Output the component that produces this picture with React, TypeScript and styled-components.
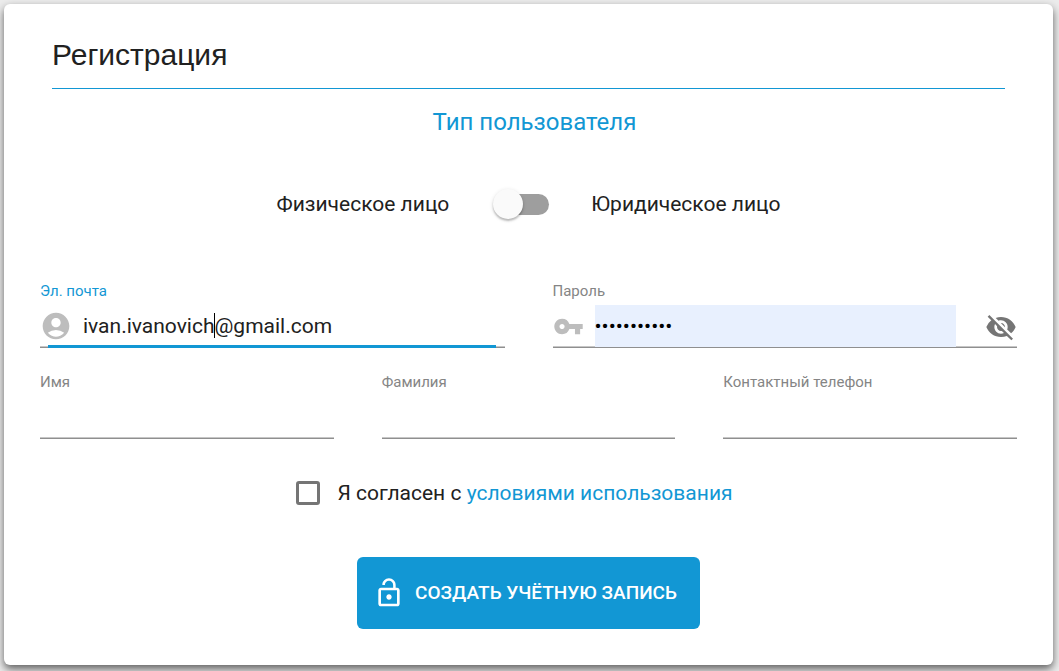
import React, { useState } from 'react';
import styled, { createGlobalStyle } from 'styled-components';
import { MdAccountCircle, MdLockOpen, MdVisibilityOff, MdVpnKey } from 'react-icons/md';

const blue = '#1297d4';

const GlobalStyle = createGlobalStyle`
  *, *::before, *::after { box-sizing: border-box; }
  body {
    margin: 0;
    background: #ececec;
    color: #212121;
    font: 400 21px/32px Roboto, sans-serif;
  }
`;

const Page = styled.main`
  padding: 4px 6px 6px 4px;
`;

const Card = styled.form`
  padding: 31px 36px 36px;
  border-radius: 6px;
  background: #fff;
  box-shadow: 0 4px 8px rgba(0, 0, 0, 0.6);
`;

const Header = styled.header`
  margin: 0 12px;
  padding-bottom: 13px;
  border-bottom: 1px solid ${blue};
`;

const Title = styled.h1`
  margin: 0;
  font: 400 30px/40px 'Liberation Sans', Arial, sans-serif;
`;

const Subtitle = styled.h2`
  margin: 17px 0 0;
  padding-left: 12px;
  color: ${blue};
  font-size: 24px;
  font-weight: 400;
  line-height: 32px;
  text-align: center;
`;

const TypeRow = styled.div`
  display: flex;
  justify-content: center;
  align-items: center;
  gap: 42px;
  margin-top: 50px;
`;

const Toggle = styled.input`
  appearance: none;
  position: relative;
  width: 54px;
  height: 21px;
  margin: 0 0 0 4px;
  border-radius: 11px;
  background: #9e9e9e;
  cursor: pointer;

  &::before {
    content: '';
    position: absolute;
    top: -5px;
    left: -2px;
    width: 30px;
    height: 30px;
    border-radius: 50%;
    background: #fafafa;
    box-shadow: 0 2px 2px rgba(0, 0, 0, 0.22), 0 1px 4px rgba(0, 0, 0, 0.12);
  }

  &:checked::before {
    left: 26px;
    background: ${blue};
  }
`;

const FieldRow = styled.div<{ $columns: number }>`
  display: grid;
  grid-template-columns: repeat(${(p) => p.$columns}, minmax(0, 1fr));
  gap: 48px;
  margin-top: 24px;
`;

const Fields = styled.section`
  padding-top: 37px;
`;

const Field = styled.div`
  display: flex;
  flex-direction: column;
  gap: 4px;
`;

const Label = styled.label<{ $active?: boolean }>`
  color: ${(p) => (p.$active ? blue : '#858585')};
  font-size: 15px;
  line-height: 20px;
`;

const Control = styled.div<{ $active?: boolean }>`
  position: relative;
  display: flex;
  align-items: center;
  height: 43px;
  border-bottom: 1px solid #8f8f8f;
  box-shadow: inset 0 -1px #c6c6c6;

  &::after {
    content: '';
    display: ${(p) => (p.$active ? 'block' : 'none')};
    position: absolute;
    right: 9px;
    bottom: -1px;
    left: 8px;
    height: 3px;
    background: ${blue};
  }
`;

const LeadingIcon = styled.span`
  display: flex;
  flex: none;
  width: 32px;
  color: #bdbdbd;
`;

const InputWrap = styled.div`
  position: relative;
  flex: 1;
  min-width: 0;
  margin-left: 11px;
`;

const TextInput = styled.input<{ $filled?: boolean }>`
  display: block;
  flex: 1;
  width: 100%;
  min-width: 0;
  height: 42px;
  margin: 0;
  padding: 0;
  border: 0;
  outline: 0;
  background: ${(p) => (p.$filled ? '#e8f0fe' : 'transparent')};
  color: ${(p) => (p.$filled ? '#000' : '#212121')};
  font: 400 21px/32px Roboto, sans-serif;
`;

const Caret = styled.span`
  position: absolute;
  top: 8px;
  left: -1px;
  height: 25px;
  border-right: 1px solid #000;
  color: transparent;
  line-height: 25px;
  white-space: pre;
  pointer-events: none;
`;

const PasswordWrap = styled(InputWrap)`
  margin-left: 10px;
`;

const IconButton = styled.button`
  display: flex;
  flex: none;
  margin: 2px 0 0 29px;
  padding: 0;
  border: 0;
  background: none;
  color: #757575;
  cursor: pointer;
`;

const Terms = styled.div`
  display: flex;
  justify-content: center;
  align-items: center;
  gap: 17px;
  margin: 38px 28px 0 0;
`;

const Checkbox = styled.input`
  appearance: none;
  width: 24px;
  height: 24px;
  margin: 0;
  border: 3px solid #757575;
  border-radius: 3px;
  cursor: pointer;

  &:checked {
    border-color: ${blue};
    background: ${blue};
  }
`;

const Link = styled.a`
  color: ${blue};
  text-decoration: none;
`;

const Submit = styled.button`
  display: flex;
  align-items: center;
  gap: 10px;
  height: 72px;
  margin: 48px auto 0;
  padding: 0 23px 0 16px;
  border: 0;
  border-radius: 6px;
  background: ${blue};
  color: #fff;
  font: 500 19px/32px Roboto, sans-serif;
  text-transform: uppercase;
  cursor: pointer;
`;

const details = [
  { id: 'first-name', label: 'Имя', type: 'text' },
  { id: 'last-name', label: 'Фамилия', type: 'text' },
  { id: 'phone', label: 'Контактный телефон', type: 'tel' },
];

export default function App() {
  const [email, setEmail] = useState('ivan.ivanovich@gmail.com');
  const [password, setPassword] = useState('qwerty12345');
  const [shown, setShown] = useState(false);

  return (
    <Page>
      <GlobalStyle />
      <Card onSubmit={(e) => e.preventDefault()}>
        <Header>
          <Title>Регистрация</Title>
        </Header>
        <Subtitle>Тип пользователя</Subtitle>
        <TypeRow>
          <span>Физическое лицо</span>
          <Toggle id="legal" type="checkbox" role="switch" aria-label="Юридическое лицо" />
          <label htmlFor="legal">Юридическое лицо</label>
        </TypeRow>

        <Fields>
          <FieldRow $columns={2}>
            <Field>
              <Label htmlFor="email" $active>Эл. почта</Label>
              <Control $active>
                <LeadingIcon><MdAccountCircle size={32} /></LeadingIcon>
                <InputWrap>
                  <TextInput id="email" type="email" value={email} onChange={(e) => setEmail(e.target.value)} />
                  <Caret aria-hidden="true">{email.split('@')[0]}</Caret>
                </InputWrap>
              </Control>
            </Field>
            <Field>
              <Label htmlFor="password">Пароль</Label>
              <Control>
                <LeadingIcon><MdVpnKey size={31} /></LeadingIcon>
                <PasswordWrap>
                  <TextInput
                    id="password"
                    type={shown ? 'text' : 'password'}
                    value={password}
                    onChange={(e) => setPassword(e.target.value)}
                    $filled
                  />
                </PasswordWrap>
                <IconButton type="button" aria-label="Показать пароль" onClick={() => setShown(!shown)}>
                  <MdVisibilityOff size={32} />
                </IconButton>
              </Control>
            </Field>
          </FieldRow>
          <FieldRow $columns={3}>
            {details.map((d) => (
              <Field key={d.id}>
                <Label htmlFor={d.id}>{d.label}</Label>
                <Control>
                  <TextInput id={d.id} type={d.type} />
                </Control>
              </Field>
            ))}
          </FieldRow>
        </Fields>

        <Terms>
          <Checkbox id="terms" type="checkbox" />
          <label htmlFor="terms">
            Я согласен с <Link href="#terms">условиями использования</Link>
          </label>
        </Terms>
        <Submit type="submit">
          <MdLockOpen size={32} />
          Создать учётную запись
        </Submit>
      </Card>
    </Page>
  );
}
